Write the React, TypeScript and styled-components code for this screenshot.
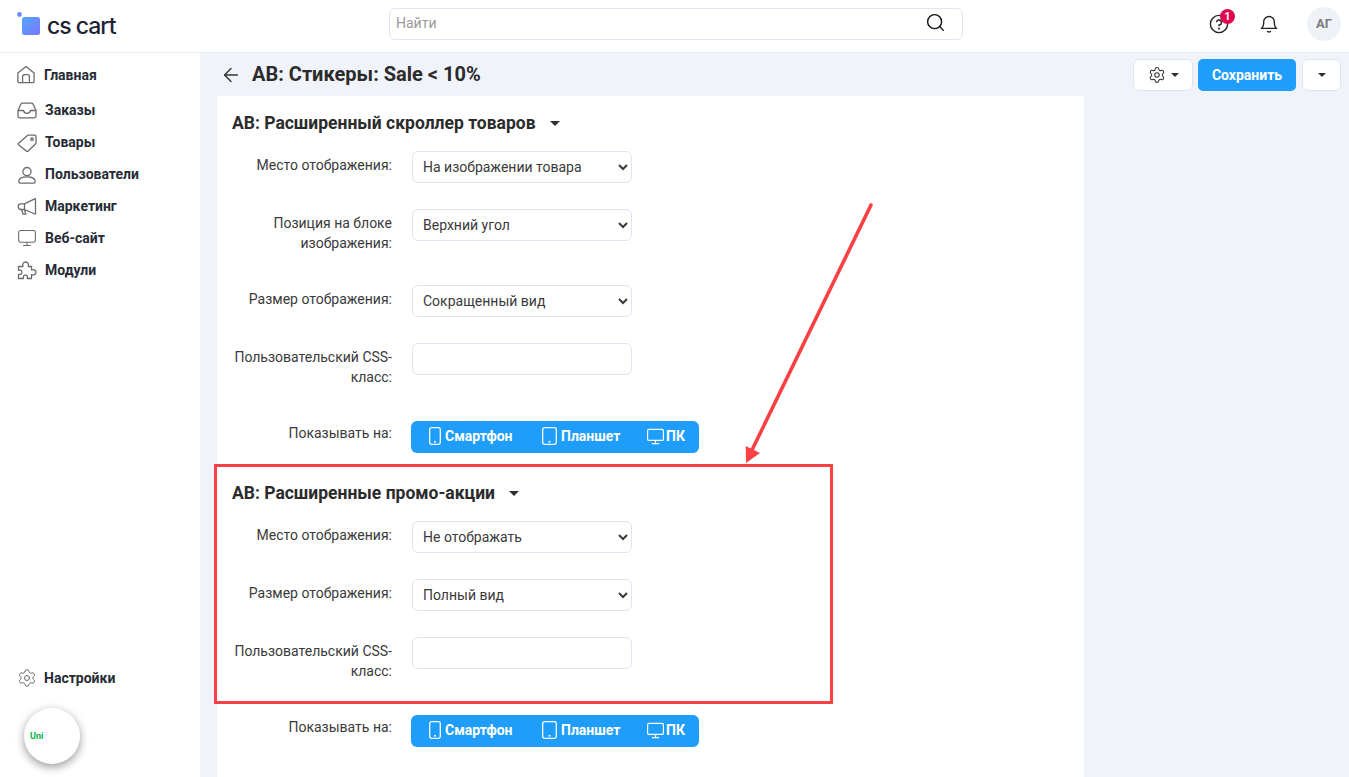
import React from "react";
import styled, { createGlobalStyle } from "styled-components";
import { ArrowLeft, Monitor, Search, Settings } from "lucide-react";

const Global = createGlobalStyle`
  html, body { margin: 0; padding: 0; height: 100%; overflow: hidden; background: #f0f4fa; }
  body { font-family: Roboto, "Liberation Sans", sans-serif; color: #2b2b2b; }
  * { box-sizing: border-box; }
`;

const Page = styled.div`
  position: relative;
  width: 1349px;
  height: 777px;
  display: flex;
  flex-direction: column;
  overflow: hidden;
`;
const Header = styled.header`
  height: 53px;
  flex: none;
  background: #fff;
  border-bottom: 1px solid #e4eaf4;
  display: flex;
  align-items: center;
  padding: 0 8px 1px 17px;
`;
const Logo = styled.div`
  width: 372px;
  flex: none;
  display: flex;
  align-items: center;
  gap: 5px;
`;
const LogoGlyph = styled.svg`
  margin-bottom: 3px;
`;
const LogoText = styled.span`
  font-family: Inter, sans-serif;
  font-size: 23px;
  font-weight: 500;
  letter-spacing: -1px;
  color: #1c2233;
`;
const SearchBox = styled.div`
  width: 574px;
  height: 32px;
  flex: none;
  margin-bottom: 4px;
  display: flex;
  align-items: center;
  justify-content: space-between;
  padding: 0 16px 2px 6px;
  border: 1px solid #dde5f1;
  border-radius: 6px;
  background: #fff;
  font-size: 14px;
  color: #9a9a9a;
`;
const HeaderIcons = styled.div`
  margin-left: auto;
  margin-bottom: 4px;
  display: flex;
  align-items: center;
`;
const HelpWrap = styled.div`
  position: relative;
  width: 20px;
  height: 20px;
  margin-right: 30px;
  display: flex;
`;
const Badge = styled.span`
  position: absolute;
  left: 11px;
  top: -5px;
  width: 15px;
  height: 15px;
  border-radius: 50%;
  background: #e0064f;
  color: #fff;
  font-size: 11px;
  font-weight: 700;
  display: flex;
  align-items: center;
  justify-content: center;
`;
const Avatar = styled.div`
  width: 34px;
  height: 34px;
  margin-left: 28px;
  border-radius: 50%;
  background: #eff3f8;
  color: #7b7b7b;
  font-size: 13px;
  font-weight: 700;
  display: flex;
  align-items: center;
  justify-content: center;
`;
const Body = styled.div`
  flex: 1;
  display: flex;
  min-height: 0;
`;
const Sidebar = styled.aside`
  width: 200px;
  flex: none;
  background: #fff;
  display: flex;
  flex-direction: column;
  padding: 6px 0 83px 17px;
`;
const NavItem = styled.div<{ $top?: number; $gap?: number }>`
  height: 32px;
  display: flex;
  align-items: center;
  gap: ${(p) => p.$gap ?? 8}px;
  margin-top: ${(p) => p.$top ?? 0}px;
  font-size: 14px;
  font-weight: 700;
  color: #262b36;
  white-space: nowrap;
  svg { flex: none; color: #6b6b6b; }
`;
const Spacer = styled.div`
  flex: 1;
`;
const Widget = styled.div`
  position: absolute;
  left: 24px;
  top: 708px;
  width: 56px;
  height: 56px;
  border-radius: 50%;
  background: #fff;
  box-shadow: 0 3px 10px rgba(0, 0, 0, 0.4);
  color: #0cb04a;
  font-size: 9px;
  font-weight: 700;
  display: flex;
  align-items: center;
  padding-left: 6px;
`;
const Main = styled.main`
  flex: 1;
  min-width: 0;
  padding-left: 17px;
  display: flex;
  flex-direction: column;
`;
const Toolbar = styled.div`
  height: 43px;
  flex: none;
  display: flex;
  align-items: center;
  padding: 0 8px 0 3px;
`;
const PageTitle = styled.h1`
  margin: 0 0 2px 10px;
  font-size: 20px;
  font-weight: 700;
  color: #2b2b2b;
`;
const Actions = styled.div`
  margin-left: auto;
  display: flex;
  align-items: center;
`;
const GhostButton = styled.div<{ $w: number; $ml?: number }>`
  width: ${(p) => p.$w}px;
  height: 32px;
  margin-left: ${(p) => p.$ml ?? 0}px;
  background: #fff;
  border: 1px solid #dfe5ef;
  border-radius: 6px;
  display: flex;
  align-items: center;
  justify-content: center;
  gap: 5px;
`;
const SaveButton = styled.div`
  width: 98px;
  height: 32px;
  margin-left: 5px;
  background: #1f9dfa;
  border-radius: 5px;
  color: #fff;
  font-size: 14px;
  font-weight: 700;
  display: flex;
  align-items: center;
  justify-content: center;
`;
const Caret = styled.span<{ $size?: number }>`
  width: 0;
  height: 0;
  border-left: ${(p) => p.$size ?? 4.5}px solid transparent;
  border-right: ${(p) => p.$size ?? 4.5}px solid transparent;
  border-top: ${(p) => p.$size ?? 4.5}px solid #2f2f2f;
`;
const Card = styled.section`
  width: 867px;
  flex: 1;
  background: #fff;
  padding: 0 0 0 15px;
  overflow: hidden;
`;
const SectionTitle = styled.h2<{ $top: number }>`
  height: 22px;
  margin: ${(p) => p.$top}px 0 17px;
  display: flex;
  align-items: center;
  gap: 14px;
  font-size: 17.5px;
  font-weight: 700;
  color: #2b2b2b;
`;
const Row = styled.div<{ $after?: number }>`
  display: flex;
  align-items: flex-start;
  margin-bottom: ${(p) => p.$after ?? 26}px;
`;
const Label = styled.label<{ $top?: number }>`
  width: 160px;
  flex: none;
  padding: ${(p) => p.$top ?? 4}px 0 6px;
  margin-right: 20px;
  text-align: right;
  font-size: 14px;
  line-height: 20px;
  color: #3a3a3a;
`;
const Select = styled.select`
  width: 220px;
  height: 32px;
  background: #fff;
  border: 1px solid #dfe5ef;
  border-radius: 6px;
  padding: 0 6px;
  font-family: inherit;
  font-size: 14px;
  color: #3a3a3a;
`;
const TextInput = styled.input`
  width: 220px;
  height: 32px;
  background: #fff;
  border: 1px solid #dfe5ef;
  border-radius: 6px;
`;
const DeviceGroup = styled.div`
  height: 32px;
  width: 288px;
  margin-left: -1px;
  background: #1f9dfa;
  border-radius: 6px;
  display: flex;
  align-items: center;
  padding: 0 0 2px 18px;
  color: #fff;
  font-size: 14px;
  font-weight: 700;
`;
const Device = styled.span<{ $w: number; $gap: number }>`
  width: ${(p) => p.$w}px;
  flex: none;
  display: flex;
  align-items: center;
  gap: ${(p) => p.$gap}px;
`;
const RedBox = styled.div`
  position: absolute;
  left: 214px;
  top: 464px;
  width: 619px;
  height: 240px;
  border: 3px solid #fb4144;
  pointer-events: none;
`;
const ArrowOverlay = styled.svg`
  position: absolute;
  left: 730px;
  top: 190px;
  pointer-events: none;
`;

const HomeIcon = () => (
  <svg width="20" height="20" viewBox="0 0 20 20" fill="none" stroke="currentColor" strokeWidth="1.3">
    <path d="M.9 8 9 1.4 17.1 8v8.4a1.3 1.3 0 0 1-1.3 1.3H2.2a1.3 1.3 0 0 1-1.3-1.3Z" strokeLinejoin="round" />
    <path d="M5.6 17.7v-6a2 2 0 0 1 2-2h2.8a2 2 0 0 1 2 2v6" />
  </svg>
);
const InboxIcon = () => (
  <svg width="20" height="20" viewBox="0 0 20 20" fill="none" stroke="currentColor" strokeWidth="1.3" strokeLinejoin="round">
    <path d="M1 10.5 4 4a1.5 1.5 0 0 1 1.4-.9h9.2A1.5 1.5 0 0 1 16 4l3 6.5v5.6a1.8 1.8 0 0 1-1.8 1.8H2.8A1.8 1.8 0 0 1 1 16.1Z" />
    <path d="M1 10.5h5.5c.4 1.8 1.6 2.8 3.5 2.8s3.1-1 3.5-2.8H19" />
  </svg>
);
const TagIcon = () => (
  <svg width="20" height="20" viewBox="0 0 20 20" fill="none" stroke="currentColor" strokeWidth="1.3" strokeLinejoin="round">
    <path d="M1.6 11.2 10.4 3.4a1.2 1.2 0 0 1 .8-.3h6.6a1.2 1.2 0 0 1 1.2 1.2v6.5a1.2 1.2 0 0 1-.4.9L11 19.2a1 1 0 0 1-1.4 0L1.6 12.7a1 1 0 0 1 0-1.5Z" />
    <circle cx="15" cy="7.2" r="1.2" />
  </svg>
);
const UserIcon = () => (
  <svg width="20" height="20" viewBox="0 0 20 20" fill="none" stroke="currentColor" strokeWidth="1.3">
    <circle cx="10" cy="7.6" r="4.1" />
    <path d="M1.8 17.5c0-3 3.4-4.6 8.2-4.6s8.2 1.6 8.2 4.6v.3a1.4 1.4 0 0 1-1.4 1.4H3.2a1.4 1.4 0 0 1-1.4-1.4Z" />
  </svg>
);
const MegaphoneIcon = () => (
  <svg width="20" height="20" viewBox="0 0 20 20" fill="none" stroke="currentColor" strokeWidth="1.3" strokeLinejoin="round">
    <path d="M18.5 3.4v14a.6.6 0 0 1-.8.6L7.5 13.5H4A2.8 2.8 0 0 1 1.2 10.7 2.8 2.8 0 0 1 4 7.9h3.5L17.7 2.8a.6.6 0 0 1 .8.6Z" />
    <path d="M7.5 8v5.5M4.5 13.5l1.6 4.7h2.7L7.5 13.5" />
  </svg>
);
const PuzzleIcon = () => (
  <svg width="20" height="20" viewBox="0 0 20 20" fill="none" stroke="currentColor" strokeWidth="1.3" strokeLinejoin="round">
    <path d="M1.5 6.5H6C5.2 4.5 6.2 2 8.6 2s3.4 2.5 2.6 4.5h3.3V10c2-1 4.5 0 4.5 2.3s-2.5 3.3-4.5 2.3v3.9H10.3c.7-1.8-.2-3.4-1.9-3.4s-2.6 1.6-1.9 3.4h-5v-4.2c1.8.6 3.4-.3 3.4-2s-1.6-2.7-3.4-2Z" />
  </svg>
);
const HelpIcon = () => (
  <svg width="20" height="20" viewBox="0 0 20 20" fill="none" stroke="#222" strokeWidth="1.4" strokeLinecap="round">
    <circle cx="10" cy="10" r="8.6" />
    <path d="M7.6 7.7A2.5 2.5 0 1 1 10 11v.8" />
    <circle cx="10" cy="14.6" r=".4" />
  </svg>
);
const BellIcon = () => (
  <svg width="20" height="20" viewBox="0 0 20 20" fill="none" stroke="#222" strokeWidth="1.4" strokeLinejoin="round" strokeLinecap="round">
    <path d="M2.4 14.4c1.6-1 2.3-3 2.3-6.6a5.3 5.3 0 0 1 10.6 0c0 3.6.7 5.6 2.3 6.6Z" />
    <path d="M8.5 17.5c.8.5 2.2.5 3 0" />
  </svg>
);
const PhoneIcon = () => (
  <svg width="12" height="18" viewBox="0 0 12 18" fill="none" stroke="#fff" strokeWidth="1.3">
    <rect x=".7" y=".7" width="10.6" height="16.6" rx="1.8" />
    <circle cx="6" cy="14.8" r=".4" fill="#fff" />
  </svg>
);
const TabletIcon = () => (
  <svg width="15" height="18" viewBox="0 0 15 18" fill="none" stroke="#fff" strokeWidth="1.3">
    <rect x=".7" y=".7" width="13.6" height="16.6" rx="1.8" />
    <circle cx="7.5" cy="14.8" r=".4" fill="#fff" />
  </svg>
);
const LogoMark = () => (
  <LogoGlyph width="25" height="24" viewBox="0 0 25 24">
    <defs>
      <linearGradient id="lg" x1="0" y1="0" x2="1" y2="1">
        <stop offset="0" stopColor="#52a8fa" />
        <stop offset="1" stopColor="#7c74ff" />
      </linearGradient>
    </defs>
    <circle cx="2.5" cy="2.5" r="2.4" fill="#6a8cff" />
    <rect x="5" y="5" width="18" height="18" rx="2.5" fill="url(#lg)" />
  </LogoGlyph>
);

const Devices = () => (
  <DeviceGroup>
    <Device $w={113} $gap={4}><PhoneIcon />Смартфон</Device>
    <Device $w={104} $gap={4}><TabletIcon />Планшет</Device>
    <Device $w={40} $gap={1}><Monitor size={19} strokeWidth={1.5} />ПК</Device>
  </DeviceGroup>
);

export default function App() {
  return (
    <Page>
      <Global />
      <Header>
        <Logo>
          <LogoMark />
          <LogoText>cs cart</LogoText>
        </Logo>
        <SearchBox>
          <span>Найти</span>
          <Search size={21} strokeWidth={1.6} color="#111" />
        </SearchBox>
        <HeaderIcons>
          <HelpWrap><HelpIcon /><Badge>1</Badge></HelpWrap>
          <BellIcon />
          <Avatar>АГ</Avatar>
        </HeaderIcons>
      </Header>
      <Body>
        <Sidebar>
          <NavItem $gap={7}><HomeIcon />Главная</NavItem>
          <NavItem $top={3}><InboxIcon />Заказы</NavItem>
          <NavItem><TagIcon />Товары</NavItem>
          <NavItem><UserIcon />Пользователи</NavItem>
          <NavItem><MegaphoneIcon />Маркетинг</NavItem>
          <NavItem><Monitor size={20} strokeWidth={1.3} />Веб-сайт</NavItem>
          <NavItem><PuzzleIcon />Модули</NavItem>
          <Spacer />
          <NavItem $gap={7}><Settings size={20} strokeWidth={1.2} />Настройки</NavItem>
        </Sidebar>
        <Main>
          <Toolbar>
            <ArrowLeft size={22} strokeWidth={1.5} color="#333" />
            <PageTitle>АВ: Стикеры: Sale &lt; 10%</PageTitle>
            <Actions>
              <GhostButton $w={60}><Settings size={18} strokeWidth={1.4} color="#333" /><Caret /></GhostButton>
              <SaveButton>Сохранить</SaveButton>
              <GhostButton $w={39} $ml={6}><Caret /></GhostButton>
            </Actions>
          </Toolbar>
          <Card>
            <SectionTitle $top={16}>АВ: Расширенный скроллер товаров <Caret $size={5} /></SectionTitle>
            <Row>
              <Label>Место отображения:</Label>
              <Select defaultValue="a"><option value="a">На изображении товара</option></Select>
            </Row>
            <Row>
              <Label>Позиция на блоке изображения:</Label>
              <Select defaultValue="a"><option value="a">Верхний угол</option></Select>
            </Row>
            <Row>
              <Label>Размер отображения:</Label>
              <Select defaultValue="a"><option value="a">Сокращенный вид</option></Select>
            </Row>
            <Row $after={28}>
              <Label>Пользовательский CSS-класс:</Label>
              <TextInput />
            </Row>
            <Row $after={0}>
              <Label $top={2}>Показывать на:</Label>
              <Devices />
            </Row>
            <SectionTitle $top={29}>АВ: Расширенные промо-акции <Caret $size={5} /></SectionTitle>
            <Row>
              <Label>Место отображения:</Label>
              <Select defaultValue="a"><option value="a">Не отображать</option></Select>
            </Row>
            <Row>
              <Label>Размер отображения:</Label>
              <Select defaultValue="a"><option value="a">Полный вид</option></Select>
            </Row>
            <Row $after={28}>
              <Label>Пользовательский CSS-класс:</Label>
              <TextInput />
            </Row>
            <Row $after={0}>
              <Label $top={2}>Показывать на:</Label>
              <Devices />
            </Row>
          </Card>
        </Main>
      </Body>
      <Widget>Uni</Widget>
      <RedBox />
      <ArrowOverlay width="160" height="290" viewBox="0 0 160 290">
        <path d="M141 15 22 260" stroke="#fb4144" strokeWidth="3.6" strokeLinecap="round" fill="none" />
        <path d="M16 273 15.7 256 30 263Z" fill="#fb4144" />
      </ArrowOverlay>
    </Page>
  );
}
